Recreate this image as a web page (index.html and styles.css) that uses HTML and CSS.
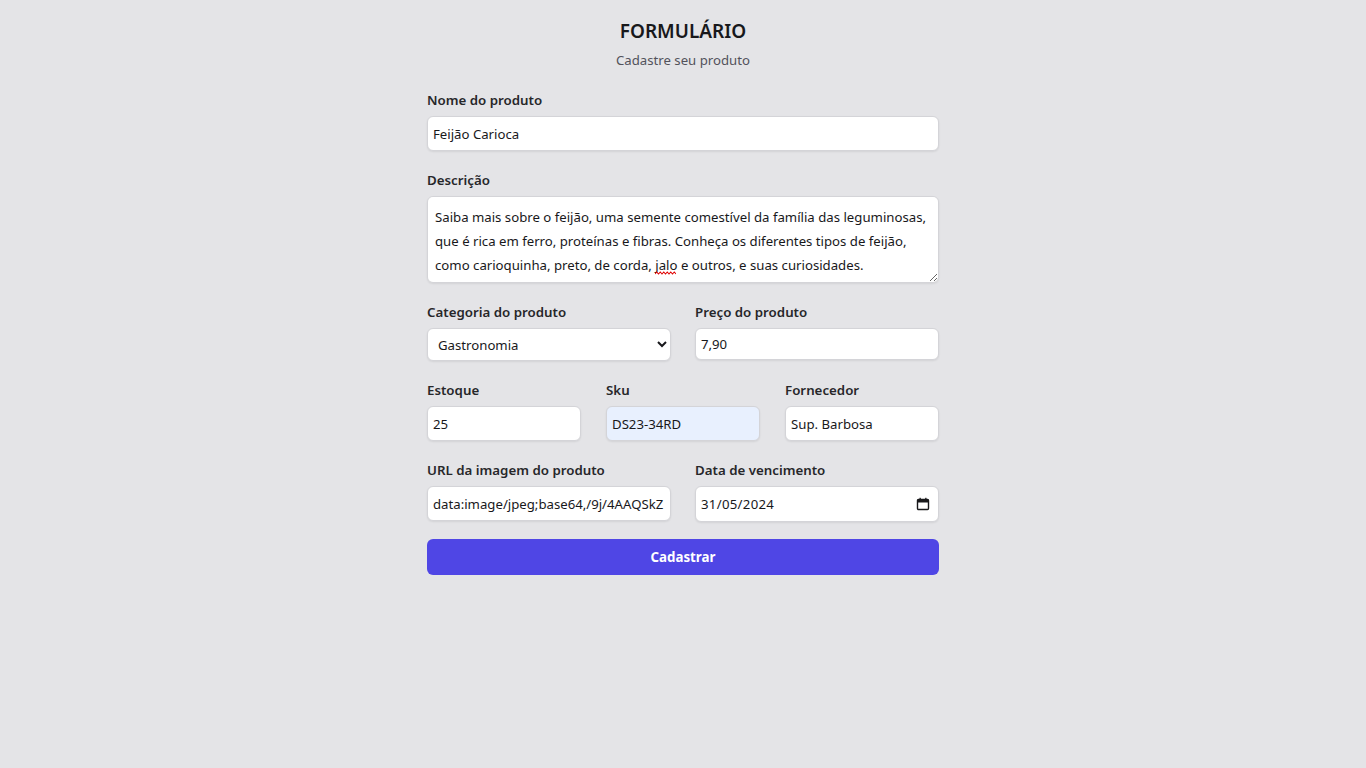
FILE: index.html
```html
<!DOCTYPE html>
<html lang="pt-BR">
<head>
<meta charset="utf-8">
<title>Formulário</title>
<link rel="stylesheet" href="styles.css">
</head>
<body>
<main class="page">
  <header class="head">
    <h1 class="title">FORMULÁRIO</h1>
    <p class="subtitle">Cadastre seu produto</p>
  </header>
  <form class="form">
    <div class="field">
      <label class="label" for="nome">Nome do produto</label>
      <input class="input" id="nome" type="text" value="Feijão Carioca">
    </div>
    <div class="field">
      <label class="label" for="desc">Descrição</label>
      <div class="area-wrap">
        <textarea class="input textarea" id="desc" rows="3">Saiba mais sobre o feijão, uma semente comestível da família das leguminosas, que é rica em ferro, proteínas e fibras. Conheça os diferentes tipos de feijão, como carioquinha, preto, de corda, jalo e outros, e suas curiosidades.</textarea>
        <svg class="squiggle" width="21" height="4" viewBox="0 0 21 4" aria-hidden="true">
          <path d="M0 3 L1.75 1 L3.5 3 L5.25 1 L7 3 L8.75 1 L10.5 3 L12.25 1 L14 3 L15.75 1 L17.5 3 L19.25 1 L21 3" fill="none" stroke="#e00000" stroke-width="1.1"/>
        </svg>
      </div>
    </div>
    <div class="row two">
      <div class="field">
        <label class="label" for="cat">Categoria do produto</label>
        <select class="input select" id="cat">
          <option>Gastronomia</option>
        </select>
      </div>
      <div class="field">
        <label class="label" for="preco">Preço do produto</label>
        <input class="input short" id="preco" type="text" value="7,90">
      </div>
    </div>
    <div class="row three">
      <div class="field">
        <label class="label" for="estoque">Estoque</label>
        <input class="input" id="estoque" type="text" value="25">
      </div>
      <div class="field">
        <label class="label" for="sku">Sku</label>
        <input class="input autofill" id="sku" type="text" value="DS23-34RD">
      </div>
      <div class="field">
        <label class="label" for="forn">Fornecedor</label>
        <input class="input" id="forn" type="text" value="Sup. Barbosa">
      </div>
    </div>
    <div class="row two">
      <div class="field">
        <label class="label" for="url">URL da imagem do produto</label>
        <input class="input" id="url" type="text" value="data:image/jpeg;base64,/9j/4AAQSkZ">
      </div>
      <div class="field">
        <label class="label" for="data">Data de vencimento</label>
        <div class="date-wrap">
          <input class="input date" id="data" type="text" value="31/05/2024">
          <svg class="cal" width="14" height="14" viewBox="0 0 14 14" aria-hidden="true">
            <rect x="1.5" y="2.5" width="11" height="10" rx="1" fill="none" stroke="#18181b" stroke-width="1.4"/>
            <rect x="1.5" y="2.5" width="11" height="3" fill="#18181b"/>
            <rect x="3.5" y="0.8" width="1.3" height="2.5" fill="#18181b"/>
            <rect x="9.2" y="0.8" width="1.3" height="2.5" fill="#18181b"/>
          </svg>
        </div>
      </div>
    </div>
    <button class="submit" type="button">Cadastrar</button>
  </form>
</main>
</body>
</html>
```
FILE: styles.css
```css
* { box-sizing: border-box; }
html, body {
  margin: 0;
  padding: 0;
  background: #e4e4e7;
  font-family: "Noto Sans", "Open Sans", sans-serif;
  color: #18181b;
}
.page {
  width: 512px;
  margin: 0 auto;
  padding-top: 17px;
}
.head {
  text-align: center;
}
.title {
  margin: 0;
  font-size: 19px;
  line-height: 28px;
  font-weight: 600;
  color: #18181b;
}
.subtitle {
  margin: 5px 0 0;
  font-size: 13.2px;
  line-height: 20px;
  color: #52525b;
}
.form {
  margin-top: 20px;
  display: flex;
  flex-direction: column;
  gap: 19px;
}
.field {
  display: flex;
  flex-direction: column;
  gap: 6px;
  min-width: 0;
}
.label {
  font-size: 13.3px;
  line-height: 20px;
  font-weight: 600;
  color: #27272a;
}
.input {
  width: 100%;
  height: 35px;
  border: 1px solid #d4d4d8;
  border-radius: 6px;
  background: #fff;
  box-shadow: 0 1px 2px rgba(0,0,0,0.08);
  padding: 0 5px;
  font-family: inherit;
  font-size: 13.2px;
  color: #18181b;
  outline: none;
}
.short { height: 32px; }
.area-wrap {
  position: relative;
}
.textarea {
  display: block;
  height: 87px;
  padding: 8px 7px;
  line-height: 24px;
  resize: vertical;
}
.squiggle {
  position: absolute;
  left: 228px;
  top: 75px;
}
.select {
  height: 33px;
  padding: 0 6px;
}
.autofill { background: #e8f0fe; }
.date-wrap {
  position: relative;
}
.date {
  height: 36px;
  letter-spacing: 0.3px;
}
.cal {
  position: absolute;
  right: 9px;
  top: 11px;
}
.row {
  display: grid;
  gap: 24px;
}
.row.two { grid-template-columns: 1fr 1fr; }
.row.three { grid-template-columns: 1fr 1fr 1fr; gap: 25px; }
.submit {
  margin-top: -2px;
  height: 36px;
  border: 0;
  border-radius: 6px;
  background: #4f46e5;
  color: #fff;
  font-family: inherit;
  font-size: 13.3px;
  font-weight: 700;
}
```
